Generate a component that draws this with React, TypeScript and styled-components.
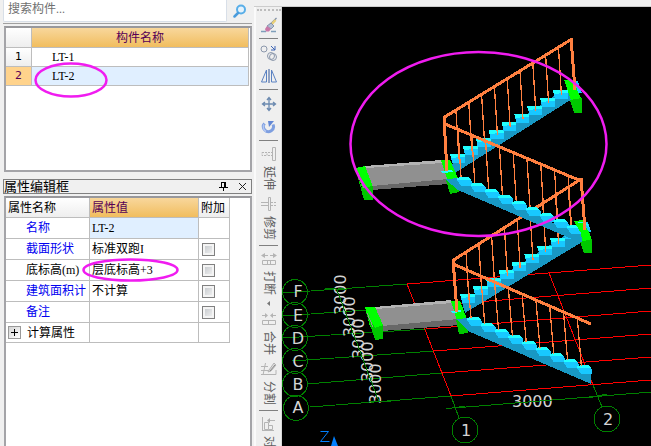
import React from "react";
import styled, { createGlobalStyle, css } from "styled-components";

const Global = createGlobalStyle`
  * { box-sizing: border-box; }
  body { margin: 0; background: #f0f0f0; }
  body, button, input, table {
    font-family: "Liberation Serif", "Noto Sans CJK SC", serif;
    font-size: 12px;
    line-height: 16px;
    color: #000;
  }
`;

const Shell = styled.div`
  display: flex;
  height: 100vh;
  overflow: hidden;
`;

const Sidebar = styled.aside`
  flex: none;
  width: 252px;
  padding-left: 3px;
  display: flex;
  flex-direction: column;
`;

const SearchBar = styled.form`
  display: flex;
  height: 24px;
  padding-bottom: 1px;
  border-bottom: 1px solid #a0a0a0;
`;

const SearchInput = styled.input`
  flex: 1;
  min-width: 0;
  padding: 0 4px 3px;
  border: 1px solid #d8dfe8;
  border-top: 0;
  border-radius: 0 0 2px 2px;
  background: #fff;
  outline: none;
  &::placeholder { color: #707070; opacity: 1; }
`;

const SearchButton = styled.button`
  width: 25px;
  padding: 0;
  border: 0;
  background: none;
  display: flex;
  justify-content: center;
  align-items: center;
`;

const Panel = styled.section<{ $grow?: boolean }>`
  margin: 2px 0 0 1px;
  padding-right: 1px;
  border: 2px solid #a4a4a8;
  border-top-color: #98989c;
  background: #fff;
  ${(p) =>
    p.$grow
      ? css`flex: 1; border-bottom: 0;`
      : css`height: 146px;`}
`;

const TitleBar = styled.header`
  display: flex;
  align-items: center;
  gap: 10px;
  height: 15px;
  margin: 7px 0 0;
  padding-right: 4px;
  border: 1px solid #808080;
`;

const Title = styled.h2`
  flex: 1;
  margin: 0;
  font-size: 13px;
  font-weight: 400;
`;

const IconButton = styled.button`
  display: flex;
  padding: 0;
  border: 0;
  background: none;
`;

const Table = styled.table`
  border-collapse: separate;
  border-spacing: 0;
  table-layout: fixed;
`;

const ComponentTable = styled(Table)`
  width: 100%;
`;

const PropertyTable = styled(Table)`
  width: 224px;
`;

type CellProps = { $tone?: "plain" | "head" | "gold" | "active" | "mark" };

const tones = {
  plain: css`background: #fff;`,
  head: css`background: linear-gradient(#fff, #eee);`,
  gold: css`background: linear-gradient(#f8d79c, #f1bd5e); color: #560056;`,
  active: css`background: #e0efff;`,
  mark: css`background: #ffd38c; color: #560056;`,
};

const cell = css<CellProps>`
  padding: 0 0 0 2px;
  border-right: 1px solid #bdbdbd;
  border-bottom: 1px solid #bdbdbd;
  font-weight: 400;
  text-align: left;
  white-space: nowrap;
  ${(p) => tones[p.$tone ?? "plain"]}
`;

const Cell = styled.td<CellProps>`
  ${cell}
  position: relative;
`;
const HeadCell = styled.th<CellProps>`${cell}`;

const CenterHead = styled(HeadCell)`
  padding: 0;
  text-align: center;
`;

const NumberCell = styled(CenterHead)`
  font-family: "DejaVu Sans", sans-serif;
  font-size: 11px;
`;

const NameCell = styled(Cell)`
  padding-left: 20px;
`;

const Row = styled.tr<{ $h: number }>`
  height: ${(p) => p.$h}px;
  line-height: 14px;
`;

const PropName = styled(HeadCell)<{ $link?: boolean }>`
  padding-left: 20px;
  overflow: hidden;
  color: ${(p) => (p.$link ? "#0000f0" : "#000")};
`;

const GroupName = styled(HeadCell)`
  & > div { display: flex; align-items: center; gap: 6px; }
`;

const ExpandButton = styled.button`
  width: 13px;
  height: 13px;
  padding: 0;
  border: 1px solid #999;
  background: linear-gradient(135deg, #d4d4d4, #fff);
  display: flex;
  align-items: center;
  justify-content: center;
`;

const Check = styled.input`
  appearance: none;
  display: block;
  width: 13px;
  height: 13px;
  margin: 0 0 0 1px;
  border: 1px solid #808080;
  background: linear-gradient(135deg, #c0c4c8, #f6f6f6);
  box-shadow: inset 0 0 0 2px #f4f4f4;
`;

const Ring = styled.svg<{ $w: number; $h: number; $x: number; $y: number }>`
  position: absolute;
  z-index: 2;
  left: ${(p) => p.$x}px;
  top: ${(p) => p.$y}px;
  width: ${(p) => p.$w}px;
  height: ${(p) => p.$h}px;
  pointer-events: none;
`;

const Work = styled.main`
  flex: 1;
  min-width: 0;
  margin-left: 2px;
  display: flex;
  flex-direction: column;
`;

const TopBar = styled.div`
  flex: none;
  height: 7px;
  overflow: hidden;
  border-bottom: 1px solid #ccc;
`;

const Body = styled.div`
  flex: 1;
  min-height: 0;
  display: flex;
`;

const Tools = styled.nav`
  flex: none;
  width: 28px;
  overflow: hidden;
  padding-top: 2px;
  display: flex;
  flex-direction: column;
  align-items: center;
  background: #efefef;
  border-left: 2px solid #fafafa;
  border-right: 1px solid #d8d8d8;
`;

const Grip = styled.div`
  flex: none;
  width: 24px;
  margin-bottom: 2px;
  border-top: 2px dotted #bcbcbc;
`;

const ToolButton = styled.button`
  flex: none;
  display: flex;
  flex-direction: column;
  align-items: center;
  justify-content: center;
  gap: 5px;
  width: 24px;
  min-height: 23px;
  padding: 0;
  border: 0;
  background: none;
`;

const TextTool = styled(ToolButton)<{ $menu?: boolean }>`
  height: ${(p) => (p.$menu ? 60 : 50)}px;
  padding-top: 2px;
  color: #5c5c5c;
`;

const VerticalLabel = styled.span`
  writing-mode: vertical-rl;
  text-orientation: sideways;
`;

const Divider = styled.hr`
  flex: none;
  width: 19px;
  margin: 2px 0;
  border: 0;
  border-top: 1px solid #808080;
`;

const Viewport = styled.div`
  flex: 1;
  min-width: 0;
  background: #000;
`;

const Scene = styled.svg`
  display: block;
  width: 100%;
  height: 100%;
`;

const SceneText = styled.text`
  font-family: "DejaVu Sans", sans-serif;
  font-size: 16px;
  font-weight: 400;
  fill: #d4d4d4;
`;

/* ---------- icons ---------- */

const tool = { width: 18, height: 18, viewBox: "0 0 18 18", fill: "none" } as const;

const BrushIcon = () => (
  <svg {...tool}>
    <path d="M1 15.500h5m5 0h5" stroke="#7f9fba" strokeWidth="1.500" />
    <path d="M16.500 2l-7 7" stroke="#8090a8" strokeWidth="1.200" />
    <path d="M15.500 4l-4.500 5" stroke="#e8cf78" strokeWidth="2.500" />
    <path d="M11 7l3 3-3 3-4-3z" fill="#b4c0d4" stroke="#7484a0" strokeWidth=".8" />
    <path d="M7 10l4 3-2 2.500H6L5 13z" fill="#c878a8" />
  </svg>
);
const CopyIcon = () => (
  <svg {...tool} stroke="#8c98ac">
    <circle cx="4" cy="5" r="3" />
    <circle cx="11" cy="12" r="3.500" />
    <circle cx="13" cy="13" r="3.500" />
    <path d="M11 2l4 4M15 2v4h-4" stroke="#3a62b4" />
  </svg>
);
const MirrorIcon = () => (
  <svg {...tool} stroke="#5b82c2">
    <path d="M6.500 3v12h-5zM11.500 3v12h5z" />
    <path d="M9 2v14" stroke="#34589a" />
  </svg>
);
const MoveIcon = () => (
  <svg {...tool} stroke="#6c8ab0" strokeWidth="1.300">
    <path d="M9 3v12M3 9h12M7 5l2-2.500L11 5M7 13l2 2.500 2-2.500M5 7L2.500 9 5 11M13 7l2.500 2-2.500 2" />
  </svg>
);
const RotateIcon = () => (
  <svg {...tool}>
    <path d="M4.500 5.500a5 5 0 1 0 8.500 1" stroke="#7e9fe0" strokeWidth="3" />
    <path d="M4 6.500a5 5 0 0 0 2 7" stroke="#b4c8f2" strokeWidth="1.500" />
    <path d="M8 3h6l-5 6z" fill="#6287d4" />
  </svg>
);

const Disabled = ({ children }: { children: React.ReactNode }) => (
  <svg width="16" height="14" viewBox="0 0 16 14" fill="none" stroke="#b4b4b4">
    {children}
  </svg>
);
const ExtendIcon = () => (
  <Disabled>
    <path d="M11.500 .5h3v13h-3z" />
    <path d="M1 5.500h5v3H1zM7 5.500h4M7 8.500h4" strokeDasharray="2 1" />
  </Disabled>
);
const TrimIcon = () => (
  <Disabled>
    <path d="M7.500 .5h2v13h-2z" />
    <path d="M0 5.500h7M0 8.500h7" />
    <path d="M10 5.500h5M10 8.500h5" strokeDasharray="2 1" />
  </Disabled>
);
const BreakIcon = () => (
  <Disabled>
    <path d="M1.500 8.500h13v4h-13zM6.500 8.500v4M9.500 8.500v4" />
    <path d="M1 3.500h6M9 3.500h6" />
    <path d="M0 3.500L4 1v5zM16 3.500L12 1v5z" fill="#b4b4b4" stroke="none" />
  </Disabled>
);
const MergeIcon = () => (
  <Disabled>
    <path d="M1.500 8.500h13v4h-13zM7.500 8.500v4" />
    <path d="M1 3.500h5M10 3.500h5" />
    <path d="M7 3.500L4 1v5zM9 3.500L12 1v5z" fill="#b4b4b4" stroke="none" />
  </Disabled>
);
const SplitIcon = () => (
  <Disabled>
    <path d="M0 4.500h7M0 12.500h15V8M4.500 1L2 13M0 8.500h8" />
    <path d="M8 8l5-7 2 2-5 6-3 1z" fill="#ddd" />
    <path d="M9 9l5-6" stroke="#888" />
  </Disabled>
);
const AlignIcon = () => (
  <Disabled>
    <path d="M1.500 0v13M3.500 5.500h4v7h-4zM7.500 8.500h4v4h-4M1 13.500h12M7 3.500h7" />
    <path d="M6 3.500L9 1v5z" fill="#aaa" stroke="none" />
  </Disabled>
);

/* ---------- 3D view ---------- */

const range = (n: number) => Array.from({ length: n }, (_, i) => i);
const ORANGE = "#ff8040";
const SIDE = "#1898c4";
const TREAD = "#20ffff";
const RISER = "#18c8ff";

type Flight = { x: number; y: number; side: string; up?: boolean };

const Steps = ({ x, y, side, up }: Flight) => (
  <g>
    <polygon points={side} fill={SIDE} />
    {range(9).map((i) => {
      const px = x + i * (up ? 12.85 : 13.8);
      const py = y + i * (up ? -8 : 6.05);
      return (
        <g key={i} transform={`translate(${px} ${py})`}>
          {up ? (
            <>
              <path d="M1 3h14v6H2z" fill={RISER} />
              <path d="M0 0h15v3H6v1H1z" fill={TREAD} />
            </>
          ) : (
            <>
              <path d="M-1 3h14l1 2v4H3z" fill={RISER} />
              <path d="M-1 1l3-1h8l3 3H-1z" fill={TREAD} />
            </>
          )}
        </g>
      );
    })}
  </g>
);

type RailProps = { from: number[]; to: number[]; top: number[]; foot: number[]; up?: boolean };

const Rail = ({ from, to, top, foot, up }: RailProps) => (
  <g stroke={ORANGE}>
    {range(9).map((i) => {
      const dx = i * (up ? 12.8 : 13.8);
      const dy = i * (up ? -8 : 6.05);
      return (
        <line key={i} x1={top[0] + dx} y1={top[1] + dy} x2={foot[0] + dx} y2={foot[1] + dy} strokeWidth="1.300" />
      );
    })}
    <line x1={from[0]} y1={from[1]} x2={to[0]} y2={to[1]} strokeWidth="3" />
  </g>
);

const Post = ({ d }: { d: string }) => <path d={d} stroke={ORANGE} strokeWidth="3" fill="none" />;

const axes = [
  { n: "F", cy: 292, g: "M283 293L407 284", r: "M407 284L651 265", ty: 297 },
  { n: "E", cy: 315, g: "M283 316L366 310", r: "M452 304L651 288", ty: 321 },
  { n: "D", cy: 338, g: "M283 338L426 329", r: "M426 329L651 311", ty: 344 },
  { n: "C", cy: 361, g: "M292 361L434 351", r: "M434 351L651 334", ty: 367 },
  { n: "B", cy: 384, g: "M307 384L442 373", r: "M442 373L651 357", ty: 390 },
  { n: "A", cy: 408, g: "M310 407L451 396", r: "M451 396L651 380", ty: 413 },
];

const spans = [
  [346, 315], [355, 337], [364, 359], [373, 382], [381, 404],
];

const Model = () => (
  <Scene viewBox="282 7 369 439" preserveAspectRatio="xMinYMin slice" role="img" aria-label="LT-2">
    <g shapeRendering="crispEdges" fill="none">
      {axes.map((a) => (
        <g key={a.n}>
          <path d={a.g} stroke="#008000" />
          <path d={a.r} stroke="#f00" />
        </g>
      ))}
      <path d="M407 284L451 396M549 273L593 385" stroke="#f00" />
      <path d="M451 396L459 418M593 385L602 407" stroke="#008000" />
    </g>
    {spans.map(([x, y]) => (
      <SceneText key={y} transform={`translate(${x} ${y}) rotate(-90)`}>3000</SceneText>
    ))}
    <SceneText x="512" y="407">3000</SceneText>
    {axes.map((a) => (
      <SceneText key={a.n} x="298" y={a.ty} textAnchor="middle">{a.n}</SceneText>
    ))}
    <SceneText x="466" y="436" textAnchor="middle">1</SceneText>
    <SceneText x="608" y="425" textAnchor="middle">2</SceneText>
    <g shapeRendering="crispEdges" fill="none" stroke="#008000">
      {axes.map((a) => (
        <circle key={a.n} cx={a.n === "A" ? 296 : 295} cy={a.cy} r="12.500" />
      ))}
      <circle cx="465" cy="430" r="13" />
      <circle cx="607" cy="419" r="13" />
      <path d="M446 409L465 406M454 408L651 392M588 398L607 394" />
      <path d="M337 290L379 402M325 288L347 290M369 401L391 402" />
    </g>
    <path d="M320.500 431.500h8l-8 10h9" fill="none" stroke="#0080ff" />
    <path d="M334 436l4 10h-7z" fill="#0080ff" />

    <g shapeRendering="crispEdges">
      {/* lower landing */}
      <polygon points="374,307 451,301 459,320 382,327" fill="#909090" />
      <polygon points="375,307 451,300 452,303 376,309" fill="#b4b4b4" />
      <polygon points="382,326 458,319 459,325 382,331" fill="#686868" />
      <polygon points="365,307 375,307 383,325 375,328 370,327" fill="#00ff00" />
      <polygon points="366,312 375,328 383,325 383,339 375,340" fill="#00c800" />
      <path d="M367 313l6 14" stroke="#909090" />

      {/* third flight and its top landing */}
      <Steps up x={460} y={294} side="462,302 564,236 582,228 582,242 465,313" />
      <polygon points="551,230 567,224 582,229 582,242" fill={SIDE} />
      <polygon points="451,301 460,301 467,319 457,321" fill="#00ff00" />
      <polygon points="456,320 467,318 468,333 459,334" fill="#00c800" />
      <Rail up from={[452, 261]} to={[581, 179]} top={[466, 252]} foot={[469, 300]} />

      {/* lowest flight */}
      <Steps x={468} y={317} side="456,319 470,318 591,372 591,384 468,331" />
      <polygon points="451,311 461,310 461,312 452,313" fill={TREAD} />
      <Rail from={[453, 264]} to={[591, 324]} top={[467, 271]} foot={[471, 318]} />
      <Post d="M453 259L457 312" />

      {/* upper landing */}
      <polygon points="364,167 442,161 450,180 372,188" fill="#909090" />
      <polygon points="365,166 441,160 443,163 366,168" fill="#b4b4b4" />
      <polygon points="372,186 448,179 448,184 372,190" fill="#686868" />
      <polygon points="356,168 365,166 373,187 362,188" fill="#00ff00" />
      <polygon points="356,171 362,188 373,186 373,200 364,200" fill="#00c800" />
      <path d="M358 173l6 15" stroke="#909090" />

      {/* top flight */}
      <Steps up x={450} y={154} side="452,164 554,96 570,91 572,99 455,173" />
      <polygon points="441,160 450,160 458,178 448,181" fill="#00ff00" />
      <polygon points="446,180 458,178 459,192 450,194" fill="#00c800" />
      <polygon points="564,80 578,81 582,93 572,94" fill={RISER} />
      <polygon points="564,80 573,81 581,98 571,100" fill="#00ff00" />
      <polygon points="570,100 582,98 582,113 574,113" fill="#00c800" />
      <Rail up from={[443, 118]} to={[572, 39]} top={[456, 111]} foot={[459, 159]} />
      <Post d="M571 38L575 90" />

      {/* second flight */}
      <Steps x={458} y={177} side="445,179 460,178 572,232 588,232 581,243 458,190" />
      <polygon points="575,221 588,222 591,232 581,234" fill={RISER} />
      <polygon points="574,221 583,220 588,231 580,232" fill="#00ff00" />
      <path d="M578 222h7l4 5" stroke={TREAD} fill="none" />
      <polygon points="581,231 589,231 592,240 582,243" fill="#00ff00" />
      <polygon points="580,242 592,239 592,253 584,253" fill="#00c800" />
      <polygon points="441,171 452,170 453,172 442,173" fill={TREAD} />
      <Rail from={[445, 124]} to={[581, 181]} top={[458, 129]} foot={[461, 177]} />
      <Post d="M444 118L447 171" />
      <Post d="M581 178L585 230" />
    </g>
    <ellipse cx="478.500" cy="144" rx="128" ry="92" fill="none" stroke="#f01cf0" strokeWidth="2.500" />
  </Scene>
);

/* ---------- data ---------- */

const properties = [
  { name: "名称", value: "LT-2", link: true, active: true },
  { name: "截面形状", value: "标准双跑I", link: true, check: true },
  { name: "底标高(m)", value: "层底标高+3", check: true, ring: true },
  { name: "建筑面积计", value: "不计算", link: true, check: true },
  { name: "备注", value: "", link: true, check: true },
];

export default function App() {
  return (
    <>
      <Global />
      <Shell>
        <Sidebar>
          <SearchBar>
            <SearchInput aria-label="搜索构件" placeholder="搜索构件..." />
            <SearchButton type="button" aria-label="搜索">
              <svg width="14" height="14" viewBox="0 0 14 14" fill="none">
                <circle cx="8" cy="5.500" r="4" fill="#e4f2fc" stroke="#58aee8" strokeWidth="2" />
                <path d="M5 9l-3.500 3.500" stroke="#4a9cdc" strokeWidth="2.500" strokeLinecap="round" />
              </svg>
            </SearchButton>
          </SearchBar>

          <Panel>
            <ComponentTable>
              <colgroup>
                <col width="26" />
                <col />
              </colgroup>
              <thead>
                <Row $h={20}>
                  <CenterHead $tone="head" />
                  <CenterHead $tone="gold" scope="col">构件名称</CenterHead>
                </Row>
              </thead>
              <tbody>
                <Row $h={19}>
                  <NumberCell $tone="head" scope="row">1</NumberCell>
                  <NameCell>LT-1</NameCell>
                </Row>
                <Row $h={19}>
                  <NumberCell $tone="mark" scope="row">2</NumberCell>
                  <NameCell $tone="active">
                    LT-2
                    <Ring $w={74} $h={36} $x={2} $y={-5} viewBox="0 0 74 36" aria-hidden>
                      <ellipse cx="37" cy="18" rx="35.500" ry="16.500" fill="none" stroke="#f01cf0" strokeWidth="2.500" />
                    </Ring>
                  </NameCell>
                </Row>
              </tbody>
            </ComponentTable>
          </Panel>

          <TitleBar>
            <Title>属性编辑框</Title>
            <IconButton aria-label="固定">
              <svg width="9" height="9" viewBox="0 0 9 9" fill="none" stroke="#000" shapeRendering="crispEdges">
                <path d="M2.500 5V.5h4V5M5.500 1v4M0 5.500h9M4.500 6v3" />
              </svg>
            </IconButton>
            <IconButton aria-label="关闭">
              <svg width="9" height="9" viewBox="0 0 9 9" stroke="#222">
                <path d="M1 1l7 7M8 1L1 8" />
              </svg>
            </IconButton>
          </TitleBar>

          <Panel $grow>
            <PropertyTable>
              <colgroup>
                <col width="84" />
                <col width="109" />
                <col width="31" />
              </colgroup>
              <thead>
                <Row $h={20}>
                  <HeadCell $tone="head" scope="col">属性名称</HeadCell>
                  <HeadCell $tone="gold" scope="col">属性值</HeadCell>
                  <HeadCell $tone="head" scope="col">附加</HeadCell>
                </Row>
              </thead>
              <tbody>
                {properties.map((p) => (
                  <Row $h={21} key={p.name}>
                    <PropName $link={p.link} scope="row">{p.name}</PropName>
                    <Cell $tone={p.active ? "active" : "plain"}>
                      {p.value}
                      {p.ring && (
                        <Ring $w={97} $h={24} $x={-8} $y={-2} viewBox="0 0 97 24" aria-hidden>
                          <ellipse cx="48.500" cy="12" rx="47" ry="10.500" fill="none" stroke="#f01cf0" strokeWidth="2.500" />
                        </Ring>
                      )}
                    </Cell>
                    <Cell>{p.check && <Check type="checkbox" aria-label={`附加 ${p.name}`} />}</Cell>
                  </Row>
                ))}
                <Row $h={20}>
                  <GroupName scope="row">
                    <div>
                      <ExpandButton aria-label="展开">
                        <svg width="7" height="7" viewBox="0 0 7 7" stroke="#000" shapeRendering="crispEdges">
                          <path d="M0 3.500h7M3.500 0v7" />
                        </svg>
                      </ExpandButton>
                      计算属性
                    </div>
                  </GroupName>
                  <Cell />
                  <Cell />
                </Row>
              </tbody>
            </PropertyTable>
          </Panel>
        </Sidebar>

        <Work>
          <TopBar>
            <svg width="397" height="6" viewBox="254 0 397 6" aria-hidden>
              <path d="M263.500 0v2l1 1.500h48.500V0" fill="#f8f8f8" stroke="#606060" />
              <path d="M286 1h2M290 1h7M293 0v2M299 1h3M304 1h5M305 0v2" stroke="#000" strokeWidth="2" />
              <path d="M323.500 0v3M431.500 0v3" stroke="#909090" />
              <path d="M373 0q4 3 9 0" fill="#b8cce4" stroke="#6080a8" />
              <path d="M441 0h3v2h-3z" fill="#d8b840" stroke="#806820" />
              <circle cx="548" cy="-1" r="3" fill="#f06050" />
              <path d="M257 2h2" stroke="#bbb" strokeWidth="2" />
            </svg>
          </TopBar>
          <Body>
            <Tools aria-label="编辑工具">
              <Grip />
              <ToolButton aria-label="格式刷"><BrushIcon /></ToolButton>
              <Divider />
              <ToolButton aria-label="复制"><CopyIcon /></ToolButton>
              <ToolButton aria-label="镜像"><MirrorIcon /></ToolButton>
              <Divider />
              <ToolButton aria-label="移动"><MoveIcon /></ToolButton>
              <ToolButton aria-label="旋转"><RotateIcon /></ToolButton>
              <Divider />
              <TextTool><ExtendIcon /><VerticalLabel>延伸</VerticalLabel></TextTool>
              <TextTool><TrimIcon /><VerticalLabel>修剪</VerticalLabel></TextTool>
              <Divider />
              <TextTool $menu>
                <BreakIcon />
                <VerticalLabel>打断</VerticalLabel>
                <svg width="3" height="5" viewBox="0 0 3 5"><path d="M3 0v5L0 2.500z" fill="#777" /></svg>
              </TextTool>
              <TextTool><MergeIcon /><VerticalLabel>合并</VerticalLabel></TextTool>
              <TextTool><SplitIcon /><VerticalLabel>分割</VerticalLabel></TextTool>
              <Divider />
              <TextTool><AlignIcon /><VerticalLabel>对齐</VerticalLabel></TextTool>
            </Tools>
            <Viewport><Model /></Viewport>
          </Body>
        </Work>
      </Shell>
    </>
  );
}
